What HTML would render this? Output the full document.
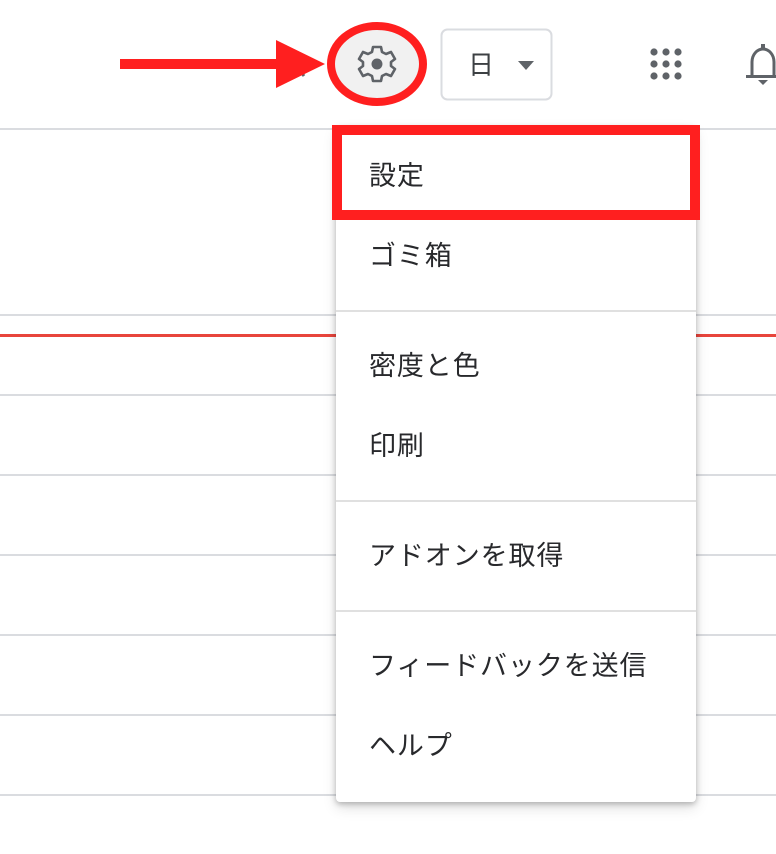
<!DOCTYPE html>
<html><head><meta charset="utf-8"><style>
body{margin:0;width:776px;height:854px;background:#fff;position:relative;overflow:hidden;font-family:"Liberation Sans","Noto Sans CJK JP",sans-serif;}
.hl{position:absolute;left:0;width:776px;height:2px;background:#dadce0}
.menu{position:absolute;left:336px;top:126px;width:360px;height:676px;background:#fff;border-radius:4px;box-shadow:0 2px 6px rgba(0,0,0,.25),0 6px 14px rgba(0,0,0,.12)}
.it{position:absolute;left:369px;font-size:27px;letter-spacing:0.9px;color:#28292c;line-height:30px}
.dv{position:absolute;left:336px;width:360px;height:2px;background:#e0e0e0}
</style></head><body>
<div class="hl" style="top:128px"></div>
<div class="hl" style="top:314px"></div>
<div class="hl" style="top:334px;background:#e8453c;height:3px"></div>
<div class="hl" style="top:394px"></div>
<div class="hl" style="top:474px"></div>
<div class="hl" style="top:554px"></div>
<div class="hl" style="top:634px"></div>
<div class="hl" style="top:714px"></div>
<div class="hl" style="top:794px"></div>

<svg style="position:absolute;left:0;top:0" width="776" height="120">
<circle cx="290" cy="60" r="10" fill="none" stroke="#5f6368" stroke-width="3"/>
<line x1="297" y1="67" x2="304" y2="76" stroke="#5f6368" stroke-width="3"/>
<rect x="120" y="59" width="160" height="10" fill="#ff1f1f"/>
<polygon points="276,40 325,64 276,88" fill="#ff1f1f"/>
<ellipse cx="377" cy="64" rx="46" ry="38" fill="#f1f1f1" stroke="#ff1f1f" stroke-width="8"/>
<g transform="translate(377,64)" fill="none" stroke="#5f6368" stroke-width="2.6" stroke-linejoin="round">
<path d="M-4,-17 L4,-17 L5,-12 L9,-10 L14,-12 L18,-5 L14,-2 L14,2 L18,5 L14,12 L9,10 L5,12 L4,17 L-4,17 L-5,12 L-9,10 L-14,12 L-18,5 L-14,2 L-14,-2 L-18,-5 L-14,-12 L-9,-10 L-5,-12 Z"/>
</g>
<circle cx="377" cy="64" r="5.5" fill="#5f6368"/>
<rect x="441.5" y="29.5" width="110" height="70" rx="6" fill="#fff" stroke="#dadce0" stroke-width="2"/>
<text x="468" y="74" font-size="26" fill="#3c4043" font-family="Liberation Sans,Noto Sans CJK JP,sans-serif">日</text>
<polygon points="518,61 534,61 526,70" fill="#5f6368"/>
<g fill="#5f6368">
<circle cx="654" cy="52" r="3.6"/><circle cx="666" cy="52" r="3.6"/><circle cx="678" cy="52" r="3.6"/>
<circle cx="654" cy="64" r="3.6"/><circle cx="666" cy="64" r="3.6"/><circle cx="678" cy="64" r="3.6"/>
<circle cx="654" cy="76" r="3.6"/><circle cx="666" cy="76" r="3.6"/><circle cx="678" cy="76" r="3.6"/>
</g>
<path d="M752,76 L752,62 A11,13 0 0 1 774,62 L774,76" fill="none" stroke="#5f6368" stroke-width="3"/>
<rect x="746" y="75" width="34" height="3" fill="#5f6368"/>
<rect x="761" y="44" width="4" height="5" fill="#5f6368"/>
<path d="M758,80 L768,80 L763,85Z" fill="#5f6368"/>
</svg>

<div class="menu"></div>
<div class="dv" style="top:310px"></div>
<div class="dv" style="top:500px"></div>
<div class="dv" style="top:610px"></div>
<div class="it" style="top:161px">設定</div>
<div class="it" style="top:241px">ゴミ箱</div>
<div class="it" style="top:351px">密度と色</div>
<div class="it" style="top:431px">印刷</div>
<div class="it" style="top:541px">アドオンを取得</div>
<div class="it" style="top:651px">フィードバックを送信</div>
<div class="it" style="top:731px">ヘルプ</div>
<div style="position:absolute;left:332px;top:125px;width:348px;height:75px;border:10px solid #ff1f1f"></div>
</body></html>
